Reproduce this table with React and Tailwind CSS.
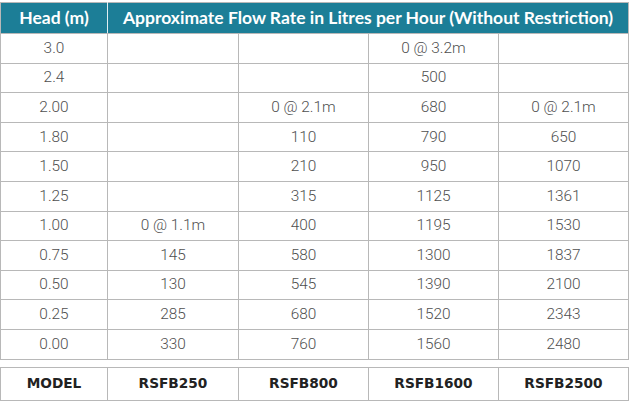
import React from 'react';

const rows = [
  ['3.0', '', '', '0 @ 3.2m', ''],
  ['2.4', '', '', '500', ''],
  ['2.00', '', '0 @ 2.1m', '680', '0 @ 2.1m'],
  ['1.80', '', '110', '790', '650'],
  ['1.50', '', '210', '950', '1070'],
  ['1.25', '', '315', '1125', '1361'],
  ['1.00', '0 @ 1.1m', '400', '1195', '1530'],
  ['0.75', '145', '580', '1300', '1837'],
  ['0.50', '130', '545', '1390', '2100'],
  ['0.25', '285', '680', '1520', '2343'],
  ['0.00', '330', '760', '1560', '2480'],
];

const models = ['MODEL', 'RSFB250', 'RSFB800', 'RSFB1600', 'RSFB2500'];

function Cols() {
  return (
    <colgroup>
      <col className="w-[107px]" />
      <col className="w-[131px]" />
      <col className="w-[130px]" />
      <col className="w-[130px]" />
      <col className="w-[130px]" />
    </colgroup>
  );
}

export default function App() {
  return (
    <div className="w-[630px] h-[402px] bg-white pt-[2px] font-['Roboto',sans-serif]">
      <table className="table-fixed border-collapse w-[629px]">
        <Cols />
        <thead>
          <tr className="h-[31px] bg-[#1c7e97] text-white font-['Lato',sans-serif] font-bold text-[17.5px]">
            <th className="border border-[#b8b8b8] border-r-[#e0eef2] font-bold">Head (m)</th>
            <th colSpan={4} className="border border-[#b8b8b8] border-l-[#e0eef2] font-bold">
              Approximate Flow Rate in Litres per Hour (Without Restriction)
            </th>
          </tr>
        </thead>
        <tbody>
          {rows.map((r, i) => (
            <tr key={i} className="h-[29.6px] text-[15.4px] font-light text-[#4f4f4f]">
              {r.map((c, j) => (
                <td key={j} className="border border-[#b8b8b8] text-center p-0">{c}</td>
              ))}
            </tr>
          ))}
        </tbody>
      </table>
      <table className="table-fixed border-collapse w-[629px] mt-[7px]">
        <Cols />
        <tbody>
          <tr className="h-[33px] text-[13.7px] font-bold text-[#222] font-['DejaVu_Sans',sans-serif]">
            {models.map((m) => (
              <td key={m} className="border border-[#b8b8b8] text-center p-0">{m}</td>
            ))}
          </tr>
        </tbody>
      </table>
    </div>
  );
}
